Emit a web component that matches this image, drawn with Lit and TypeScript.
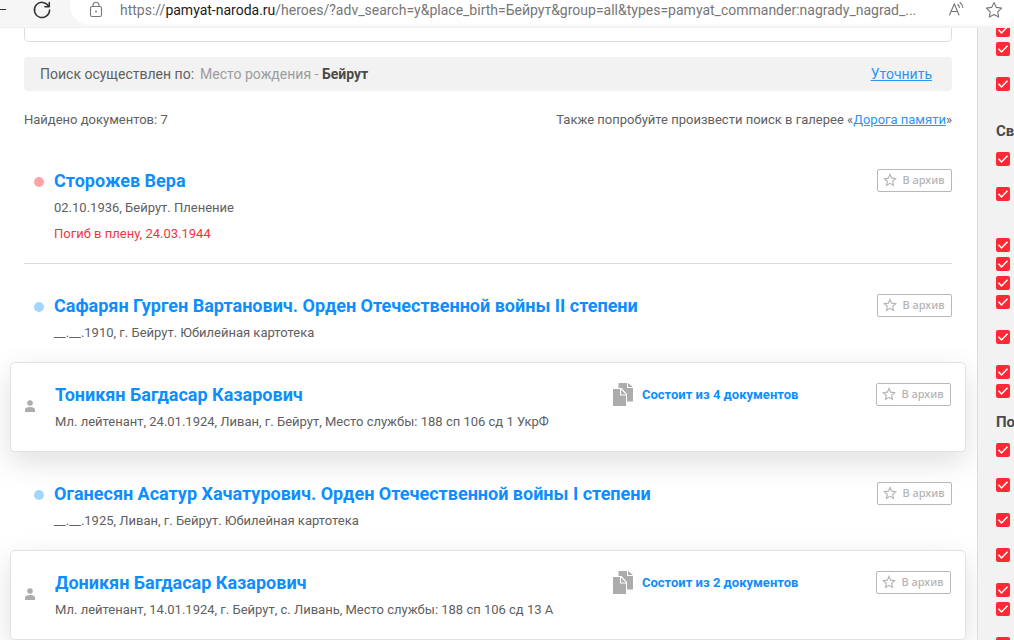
import { LitElement, html, css, svg, nothing } from "lit";
import { customElement, property } from "lit/decorators.js";

type Kind = "captivity" | "award" | "person";

interface Hero {
  kind: Kind;
  name: string;
  meta: string;
  fate?: string;
  documents?: number;
}

const heroes: Hero[] = [
  { kind: "captivity", name: "Сторожев Вера", meta: "02.10.1936, Бейрут. Пленение", fate: "Погиб в плену, 24.03.1944" },
  { kind: "award", name: "Сафарян Гурген Вартанович. Орден Отечественной войны II степени", meta: "__.__.1910, г. Бейрут. Юбилейная картотека" },
  { kind: "person", name: "Тоникян Багдасар Казарович", meta: "Мл. лейтенант, 24.01.1924, Ливан, г. Бейрут, Место службы: 188 сп 106 сд 1 УкрФ", documents: 4 },
  { kind: "award", name: "Оганесян Асатур Хачатурович. Орден Отечественной войны I степени", meta: "__.__.1925, Ливан, г. Бейрут. Юбилейная картотека" },
  { kind: "person", name: "Доникян Багдасар Казарович", meta: "Мл. лейтенант, 14.01.1924, г. Бейрут, с. Ливань, Место службы: 188 сп 106 сд 13 А", documents: 2 },
];

/* Each number is how many lines the option's label takes. */
const filters: { title?: string; options: number[] }[] = [
  { options: [1, 2, 2] },
  { title: "Св", options: [2, 3, 1, 1, 1, 2, 2, 1, 1] },
  { title: "По", options: [2, 2, 2, 2, 1, 2, 2] },
];

const starPath = "M8 1.6l1.9 4.3 4.6.5-3.4 3.1.9 4.6L8 11.8l-4 2.3.9-4.6L1.5 6.4l4.6-.5z";

@customElement("browser-bar")
class BrowserBar extends LitElement {
  static styles = css`
    :host {
      display: flex;
      height: 28px;
      box-sizing: border-box;
      flex: none;
      background: #f6f6f6;
      border-bottom: 1px solid #f0f0f0;
      overflow: hidden;
    }
    button {
      border: 0;
      padding: 0;
      background: none;
      display: flex;
      flex: none;
    }
    svg { display: block; }
    .nav { display: flex; width: 70px; flex: none; }
    .back { width: 6px; overflow: hidden; margin-right: 25px; }
    .address {
      flex: 1;
      min-width: 0;
      display: flex;
      height: 25px;
      box-sizing: border-box;
      padding: 0 11px 0 18px;
      background: #fff;
      border-radius: 0 0 12px 20px;
    }
    .url {
      flex: 1;
      min-width: 0;
      margin-left: 16px;
      font-size: 14px;
      line-height: 21px;
      color: #767676;
      white-space: nowrap;
      overflow: hidden;
    }
    .domain { color: #1a1a1a; }
    .star { margin-left: 20px; }
  `;

  render() {
    return html`
      <div class="nav">
        <button class="back" aria-label="Назад">
          <svg width="6" height="20" fill="none" stroke="#333"><path d="M0 9.5h6" /></svg>
        </button>
        <button aria-label="Обновить">
          <svg width="20" height="20" fill="none" stroke="#333" stroke-width="1.5" stroke-linecap="round" stroke-linejoin="round">
            <path d="M17.6 6.2A7.6 7.6 0 1 0 18.6 10M18.3 2.4v4.3h-4.4" />
          </svg>
        </button>
      </div>
      <div class="address">
        <button aria-label="Сведения о сайте">
          <svg width="16" height="20" fill="none" stroke="#767676" stroke-width="1.1">
            <rect x="2.5" y="6.5" width="11" height="10" rx="1.8" />
            <path d="M5 6.500V5.200a3 3 0 0 1 6 0V6.500" />
            <circle cx="8" cy="11.500" r=".9" fill="#767676" stroke="none" />
          </svg>
        </button>
        <div class="url">https://<span class="domain">pamyat-naroda.ru</span>/heroes/?adv_search=y&amp;place_birth=Бейрут&amp;group=all&amp;types=pamyat_commander:nagrady_nagrad_...</div>
        <button aria-label="Прочесть вслух">
          <svg width="17" height="20" fill="none" stroke="#767676" stroke-width="1.1" stroke-linecap="round">
            <path d="M1.500 15L6.300 4 11 15M3.200 11.500h6.200M9.800 4.500a4 4 0 0 1 1.600 3M12 2.500a7 7 0 0 1 2.800 5" />
          </svg>
        </button>
        <button class="star" aria-label="Добавить в избранное">
          <svg width="18" height="20" fill="none" stroke="#767676" stroke-width="1.1" stroke-linejoin="round">
            <path d="M9 2.500l2.300 4.900 5.300.7-3.900 3.700 1 5.300L9 14.500l-4.700 2.600 1-5.300L1.400 8.100l5.300-.7z" />
          </svg>
        </button>
      </div>
    `;
  }
}

@customElement("hero-entry")
class HeroEntry extends LitElement {
  @property({ attribute: false }) hero!: Hero;

  static styles = css`
    :host { display: block; }
    .entry {
      display: grid;
      grid-template-columns: 30px minmax(0, 1fr) auto auto;
      padding: 30px 0 16px;
    }
    .captivity { border-bottom: 1px solid #dcdcdc; }
    .person {
      margin: 0 -14px;
      padding: 20px 14px 16px;
      border: 1px solid #e2e2e2;
      border-radius: 5px;
      background: #fff;
      box-shadow: 0 10px 30px rgba(0, 0, 0, 0.13);
    }
    .dot {
      width: 10px;
      height: 10px;
      border-radius: 50%;
      margin: 8px 0 0 10px;
    }
    .captivity .dot { background: #ffa3a6; }
    .award .dot { background: #a3d6ff; }
    .figure { display: block; margin-top: 17px; }
    .name {
      margin: 0 0 2px;
      font-size: 18px;
      line-height: 24px;
      font-weight: 700;
      white-space: nowrap;
    }
    a { color: #0d8eff; text-decoration: none; }
    .line {
      margin: 0;
      font-size: 13px;
      line-height: 26px;
      color: #606060;
      white-space: nowrap;
    }
    .fate { color: #f5333f; }
    .documents {
      display: flex;
      align-items: center;
      gap: 9px;
      width: 263px;
      height: 23px;
      font-size: 13px;
      font-weight: 700;
      white-space: nowrap;
    }
    .archive {
      display: flex;
      align-items: center;
      justify-content: center;
      gap: 5px;
      width: 75px;
      height: 23px;
      box-sizing: border-box;
      padding: 0 1px 1px 0;
      border: 1px solid #b8b8b8;
      border-radius: 2px;
      background: #fff;
      color: #b4b4b4;
      font: 500 11px/16px "Noto Sans", sans-serif;
      grid-column: 4;
    }
  `;

  render() {
    const { kind, name, meta, fate, documents } = this.hero;
    return html`
      <article class="entry ${kind}">
        ${kind === "person"
          ? html`<svg class="figure" width="10" height="12" fill="#acacac">
              <circle cx="5" cy="3" r="2.800" />
              <path d="M0 12V9.800C0 7.900 2 7 5 7s5 .9 5 2.800V12z" />
            </svg>`
          : html`<div class="dot"></div>`}
        <div>
          <h2 class="name"><a href="#">${name}</a></h2>
          <p class="line">${meta}</p>
          ${fate ? html`<p class="line fate">${fate}</p>` : nothing}
        </div>
        ${documents
          ? html`<a class="documents" href="#">
              <svg width="20" height="23" fill="#acacac">
                <path d="M5.500 0H14v5h6v13.500h-6V11L8.500 5h-3z" />
                <path d="M15 0l5 4h-5z" />
                <path d="M0 6h7v6.500h6V23H0z" />
                <path d="M8 6.500l5 5H8z" />
              </svg>
              <span>Состоит из ${documents} документов</span>
            </a>`
          : nothing}
        <button class="archive">
          <svg width="14" height="14" viewBox="0 0 16 16" fill="none" stroke="#b4b4b4" stroke-width="1.300">${svg`<path d=${starPath} />`}</svg>
          В архив
        </button>
      </article>
    `;
  }
}

@customElement("filter-panel")
class FilterPanel extends LitElement {
  static styles = css`
    :host {
      display: block;
      box-sizing: border-box;
      flex: none;
      width: 37px;
      padding-left: 18px;
      border-left: 1px solid #dcdcdc;
      background: #f2f2f2;
      overflow: hidden;
    }
    .group { border: 0; margin: 0; padding: 0; }
    .group:first-child { margin-top: -5px; }
    .title {
      padding: 0;
      height: 40px;
      font-size: 15px;
      line-height: 38px;
      font-weight: 700;
      color: #4a4a4a;
    }
    .option { display: block; height: 35px; }
    .lines-1 { height: 19px; }
    .lines-3 { height: 51px; }
    input {
      appearance: none;
      display: block;
      width: 14px;
      height: 14px;
      margin: 0;
      border-radius: 2px;
    }
    input:checked {
      background: #ff2936 url("data:image/svg+xml,%3Csvg xmlns='http://www.w3.org/2000/svg' width='14' height='14' fill='none' stroke='%23fff' stroke-width='1.500'%3E%3Cpath d='M2.500 6.800l3 3.200 6-6.300'/%3E%3C/svg%3E");
    }
  `;

  render() {
    return filters.map(
      (group) => html`<fieldset class="group">
        ${group.title ? html`<legend class="title">${group.title}</legend>` : nothing}
        ${group.options.map(
          (lines) => html`<label class="option lines-${lines}"><input type="checkbox" aria-label="Источник" checked /></label>`,
        )}
      </fieldset>`,
    );
  }
}

@customElement("app-root")
class AppRoot extends LitElement {
  static styles = css`
    :host {
      display: flex;
      flex-direction: column;
      height: 100vh;
      overflow: hidden;
      background: #fff;
      font-family: Roboto, "Noto Sans", sans-serif;
      color: #606060;
    }
    .page { display: flex; flex: 1; min-height: 0; overflow: hidden; }
    .results { flex: 1; min-width: 0; padding: 0 25px 0 24px; }
    .form-end {
      height: 14px;
      box-sizing: border-box;
      border: 1px solid #dcdcdc;
      border-top: 0;
      border-radius: 0 0 5px 5px;
    }
    .query {
      display: flex;
      align-items: center;
      margin-top: 15px;
      padding: 0 20px 0 16px;
      border-radius: 4px;
      background: #f2f2f2;
      font-size: 14px;
      line-height: 34px;
      white-space: nowrap;
    }
    .criterion { flex: 1; margin-left: 6px; color: #9c9c9c; }
    .criterion b { color: #4a4a4a; }
    a { color: #2b95f5; text-decoration: underline; }
    .summary {
      display: flex;
      justify-content: space-between;
      padding: 16px 0 6px;
      font-size: 13px;
      line-height: 26px;
      white-space: nowrap;
    }
  `;

  render() {
    return html`
      <browser-bar></browser-bar>
      <div class="page">
        <main class="results">
          <div class="form-end"></div>
          <div class="query">
            <span>Поиск осуществлен по:</span>
            <span class="criterion">Место рождения - <b>Бейрут</b></span>
            <a href="#">Уточнить</a>
          </div>
          <div class="summary">
            <span>Найдено документов: 7</span>
            <span>Также попробуйте произвести поиск в галерее «<a href="#">Дорога памяти</a>»</span>
          </div>
          ${heroes.map((hero) => html`<hero-entry .hero=${hero}></hero-entry>`)}
        </main>
        <filter-panel></filter-panel>
      </div>
    `;
  }
}
